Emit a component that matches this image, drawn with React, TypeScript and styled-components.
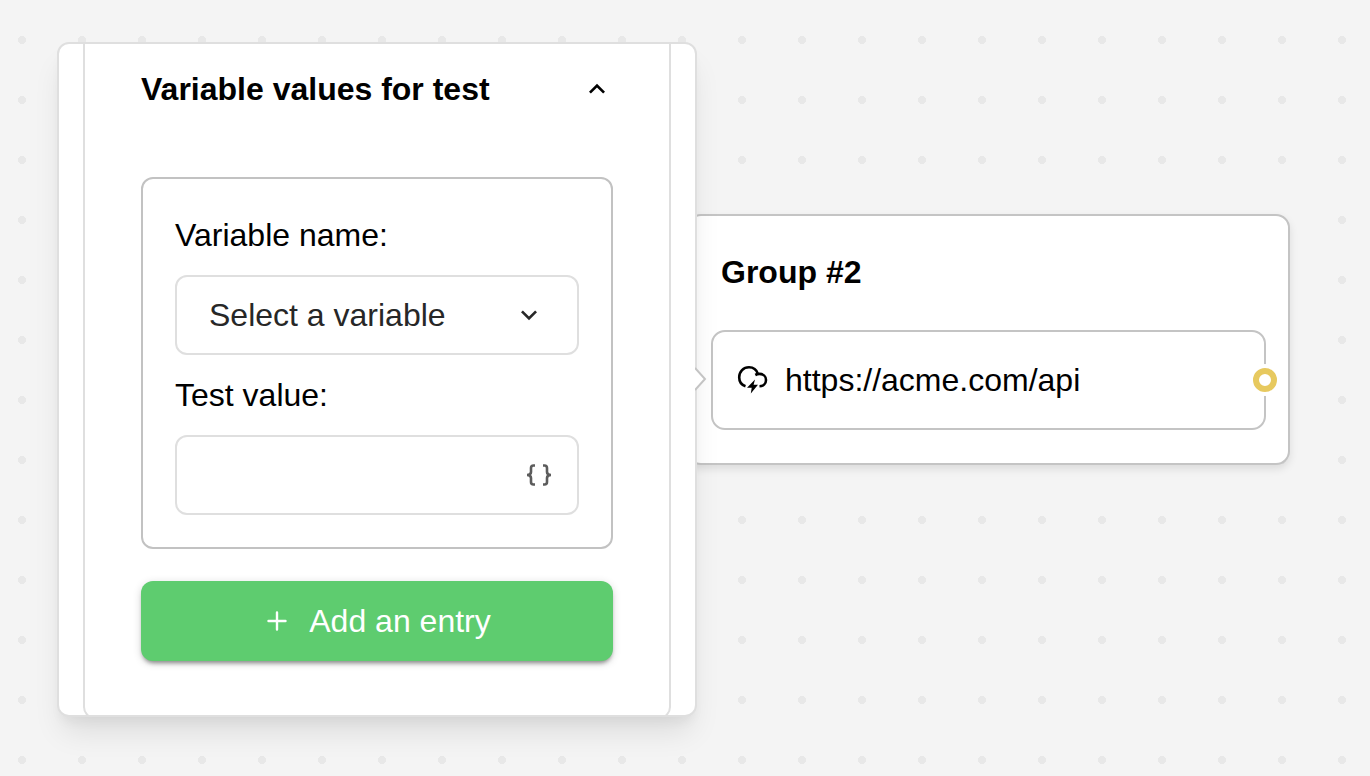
import React from 'react';
import styled, { createGlobalStyle } from 'styled-components';

const GlobalStyle = createGlobalStyle`
  *, *::before, *::after { box-sizing: border-box; }
  body {
    margin: 0;
    color: #000;
    font-family: "Liberation Sans", Arial, sans-serif;
    font-size: 32px;
    line-height: 48px;
  }
  button, input, select { font: inherit; }
`;

const Canvas = styled.main`
  display: flex;
  align-items: flex-start;
  min-height: 100vh;
  padding: 42px 80px 56px 57px;
  background-color: #f4f4f4;
  background-image: radial-gradient(circle, #e8e8e8 4px, transparent 4px);
  background-size: 60px 60px;
  background-position: -8px 10px;
`;

const Popover = styled.aside`
  position: relative;
  z-index: 1;
  flex: 0 1 640px;
  min-width: 0;
  border: 2px solid #dfdfdf;
  border-radius: 12px;
  background: #fff;
  box-shadow: 0 20px 30px -6px rgba(0, 0, 0, 0.1), 0 8px 12px -4px rgba(0, 0, 0, 0.05);
`;

const PopoverBody = styled.div`
  overflow: hidden;
  padding: 0 24px;
  border-radius: 10px;
`;

const Section = styled.section`
  margin-bottom: -4px;
  padding: 21px 56px 56px;
  border: 2px solid #dfdfdf;
  border-top: 0;
  border-radius: 0 0 12px 12px;
`;

const SectionTitle = styled.h2`
  margin: 0 0 64px;
  font: inherit;
`;

const SectionToggle = styled.button`
  display: flex;
  align-items: center;
  justify-content: space-between;
  width: 100%;
  padding: 0;
  border: 0;
  background: none;
  color: #000;
  font-weight: 700;
  text-align: left;
  cursor: pointer;
`;

const Entry = styled.div`
  display: flex;
  flex-direction: column;
  gap: 16px;
  margin-bottom: 32px;
  padding: 32px;
  border: 2px solid #c2c2c2;
  border-radius: 12px;
`;

const Field = styled.div`
  display: flex;
  align-items: center;
  height: 80px;
  border: 2px solid #dfdfdf;
  border-radius: 12px;
`;

const SelectField = styled(Field)`
  display: grid;
  color: #272727;

  > * { grid-area: 1 / 1; }
  > svg { justify-self: end; margin-right: 32px; pointer-events: none; }
`;

const Select = styled.select`
  width: 100%;
  height: 100%;
  padding: 0 80px 0 32px;
  border: 0;
  border-radius: 10px;
  appearance: none;
  background: none;
  color: inherit;
`;

const TextInput = styled.input`
  flex: 1;
  min-width: 0;
  height: 100%;
  padding: 0 32px;
  border: 0;
  border-radius: 10px;
  background: none;
`;

const InsertButton = styled.button`
  display: flex;
  align-items: center;
  justify-content: center;
  width: 64px;
  height: 64px;
  margin-right: 6px;
  padding: 0;
  border: 0;
  background: none;
  color: #5c5c5c;
`;

const AddButton = styled.button`
  display: flex;
  align-items: center;
  justify-content: center;
  gap: 18px;
  width: 100%;
  height: 80px;
  padding: 0 32px;
  border: 0;
  border-radius: 12px;
  background: #5ecc6f;
  color: #fff;
  box-shadow: 0 4px 4px -2px rgba(0, 0, 0, 0.4), 0 2px 8px rgba(0, 0, 0, 0.16);
`;

const Pointer = styled.svg`
  position: absolute;
  top: 323px;
  left: 100%;
`;

const Group = styled.article`
  flex: 1;
  min-width: 0;
  margin: 172px 0 0 -10px;
  padding: 32px 22px 33px;
  border: 2px solid #c4c4c4;
  border-radius: 14px;
  background: #fff;
  box-shadow: 0 4px 8px rgba(0, 0, 0, 0.1);
`;

const GroupTitle = styled.h2`
  margin: 0 0 34px;
  padding: 0 10px;
  font-size: 32px;
  line-height: 48px;
`;

const Block = styled.div`
  position: relative;
  display: flex;
  align-items: center;
  gap: 16px;
  height: 100px;
  padding: 0 24px;
  border: 2px solid #c4c4c4;
  border-radius: 14px;
`;

const Port = styled.span`
  position: absolute;
  top: 50%;
  right: -17px;
  width: 32px;
  height: 32px;
  transform: translateY(-50%);
  border: 4px solid #fff;
  border-radius: 50%;
  background: #fff;

  &::before {
    content: "";
    display: block;
    height: 24px;
    border: 6px solid #e7c95f;
    border-radius: 50%;
  }
`;

const Chevron = ({ up = false }: { up?: boolean }) => (
  <svg width="32" height="32" viewBox="0 0 24 24" fill="currentColor" aria-hidden="true">
    <path
      d={
        up
          ? 'M12 8l-6 6 1.41 1.41L12 10.83l4.59 4.58L18 14z'
          : 'M16.59 8.59L12 13.17 7.41 8.59 6 10l6 6 6-6z'
      }
    />
  </svg>
);

const BracesIcon = () => (
  <svg width="28" height="28" viewBox="0 0 28 28" fill="none" stroke="currentColor" strokeWidth="2.6" aria-hidden="true">
    <path d="M10 4.500H8.500Q6 4.500 6 7V11Q6 14 2 14Q6 14 6 17V21Q6 23.500 8.500 23.500H10" />
    <path d="M18 4.500H19.500Q22 4.500 22 7V11Q22 14 26 14Q22 14 22 17V21Q22 23.500 19.500 23.500H18" />
  </svg>
);

const PlusIcon = () => (
  <svg width="28" height="28" viewBox="0 0 28 28" fill="none" stroke="currentColor" strokeWidth="2.4" strokeLinecap="round" aria-hidden="true">
    <path d="M14 5.500v17M5.500 14h17" />
  </svg>
);

const WebhookIcon = () => (
  <svg width="32" height="32" viewBox="0 0 32 32" fill="none" stroke="currentColor" strokeWidth="2.6" aria-hidden="true">
    <path d="M8.500 22.300C4.500 21 2.200 17.500 2.200 13.300C2.200 7.500 6.500 3.300 12 3.300C16.200 3.300 19.600 5.800 20.900 9.900" />
    <path d="M18.300 11C19.700 10.200 21 9.900 22.500 9.900C26.300 9.900 29 12.500 29 16C29 19.500 26.500 22.200 22.500 22.300" />
    <path d="M18 15.500L10 23.800h4.700L13.800 29.500l7.200-8.700h-4.400z" fill="currentColor" stroke="none" />
  </svg>
);

export default function App() {
  return (
    <>
      <GlobalStyle />
      <Canvas>
        <Popover>
          <PopoverBody>
            <Section>
              <SectionTitle>
                <SectionToggle type="button" aria-expanded="true" aria-controls="test-values">
                  Variable values for test
                  <Chevron up />
                </SectionToggle>
              </SectionTitle>
              <div id="test-values">
                <Entry>
                  <label htmlFor="variable">Variable name:</label>
                  <SelectField>
                    <Select id="variable">
                      <option>Select a variable</option>
                    </Select>
                    <Chevron />
                  </SelectField>
                  <label htmlFor="test-value">Test value:</label>
                  <Field>
                    <TextInput id="test-value" type="text" />
                    <InsertButton type="button" aria-label="Insert a variable">
                      <BracesIcon />
                    </InsertButton>
                  </Field>
                </Entry>
                <AddButton type="button">
                  <PlusIcon />
                  Add an entry
                </AddButton>
              </div>
            </Section>
          </PopoverBody>
          <Pointer width="12" height="24" viewBox="0 0 12 24" aria-hidden="true">
            <path d="M0 1L10 12L0 23" fill="#fff" stroke="#c4c4c4" strokeWidth="2" />
          </Pointer>
        </Popover>
        <Group>
          <GroupTitle>Group #2</GroupTitle>
          <Block>
            <WebhookIcon />
            https://acme.com/api
            <Port />
          </Block>
        </Group>
      </Canvas>
    </>
  );
}
